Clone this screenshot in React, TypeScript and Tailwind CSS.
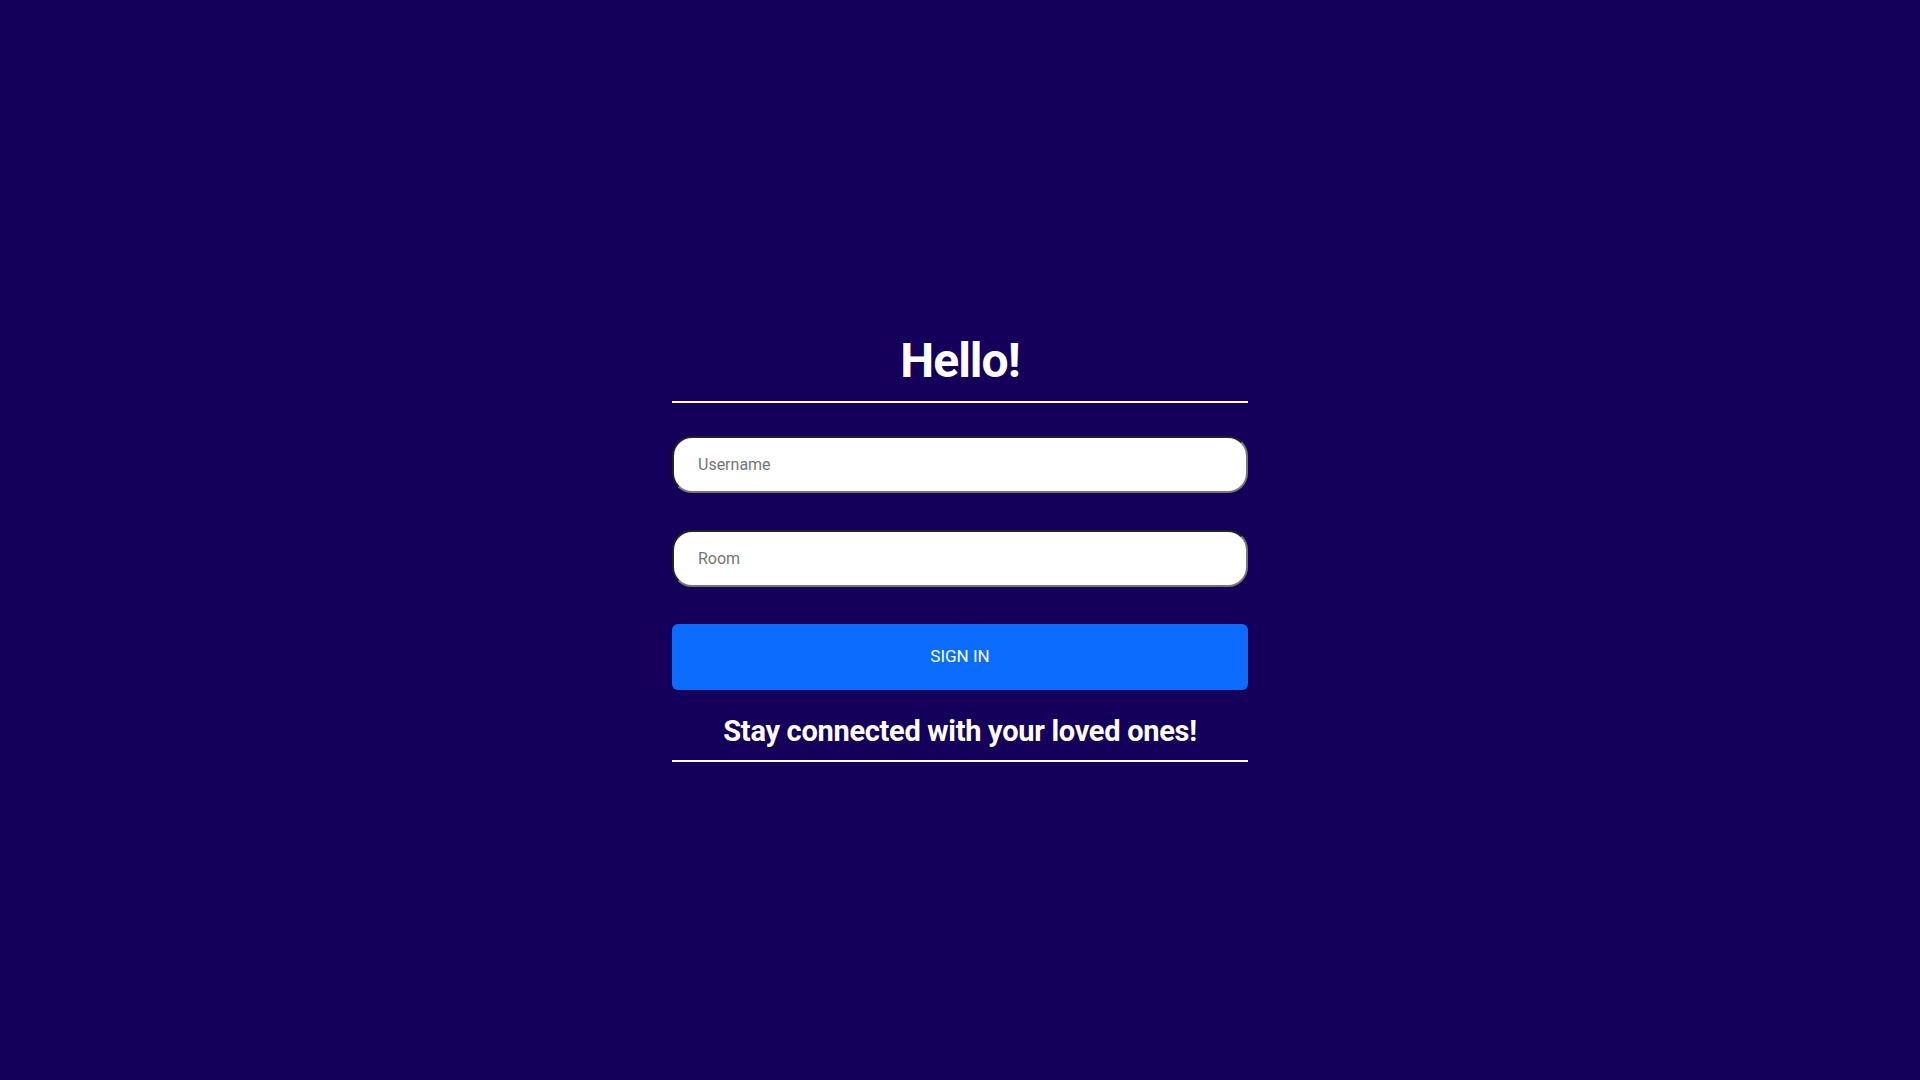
import { useState } from "react"

export default function App() {
  const [username, setUsername] = useState("")
  const [room, setRoom] = useState("")

  return (
    <div className="min-h-screen w-full bg-[#14005a] font-['Roboto',sans-serif] text-white">
      <div className="mx-auto w-[576px] pt-[332px]">
        <h1 className="text-center text-[48px] font-bold leading-[1.2] tracking-[-1px]">Hello!</h1>
        <div className="mt-[11px] h-[2px] w-full bg-white" />

        <form
          className="mt-[33px] flex flex-col gap-[37px]"
          onSubmit={(e) => e.preventDefault()}
        >
          <input
            type="text"
            placeholder="Username"
            value={username}
            onChange={(e) => setUsername(e.target.value)}
            className="h-[57px] w-full rounded-[20px] border-2 border-t-[#232323] border-l-[#232323] border-r-[#767676] border-b-[#767676] bg-white pl-6 text-[16px] text-black outline-none placeholder:text-[#757575]"
          />
          <input
            type="text"
            placeholder="Room"
            value={room}
            onChange={(e) => setRoom(e.target.value)}
            className="h-[57px] w-full rounded-[20px] border-2 border-t-[#232323] border-l-[#232323] border-r-[#767676] border-b-[#767676] bg-white pl-6 text-[16px] text-black outline-none placeholder:text-[#757575]"
          />
          <button
            type="submit"
            className="h-[66px] w-full rounded-md bg-[#0b6cfe] text-[17px] text-white"
          >
            SIGN IN
          </button>
        </form>

        <h3 className="mt-[24px] text-center text-[29px] font-bold leading-[1.2] tracking-[-0.3px]">
          Stay connected with your loved ones!
        </h3>
        <div className="mt-[12px] h-[2px] w-full bg-white" />
      </div>
    </div>
  )
}
